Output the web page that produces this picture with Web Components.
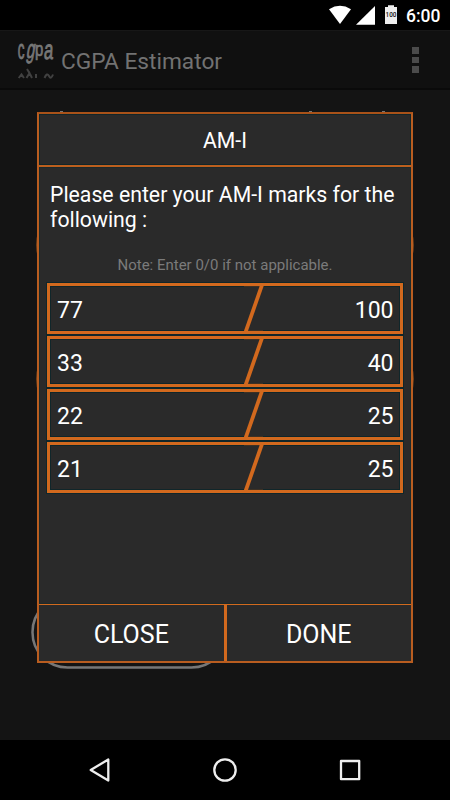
<!DOCTYPE html>
<html lang="en"><head><meta charset="utf-8"><title>CGPA Estimator</title>
<style>html,body{margin:0;background:#000}body{font-family:Roboto,"Noto Sans",sans-serif;color:#fff}</style></head>
<body><cgpa-screen></cgpa-screen>
<script>
const define=(name,html)=>customElements.define(name,class extends HTMLElement{
  constructor(){super();this.attachShadow({mode:'open'}).innerHTML=html;}
});
define('status-bar',`<style>:host{display:flex;height:30px;background:#000;align-items:center;justify-content:flex-end;padding-right:10px;box-sizing:border-box}
svg{display:block}span{font-size:17.5px;font-weight:500;line-height:32px;margin-left:8px;width:34px;white-space:nowrap;height:30px}</style>
<svg width="70" height="30" viewBox="328 0 70 30"><path d="M329 9.2Q340 2.5 351 9.2L340 24Z" fill="#fff"/><path d="M375 6V24.7H356Z" fill="#fff"/><path d="M388 5.3h6v1.8h3V24h-12V7.1h3Z" fill="#eee"/><text x="391" y="17.3" font-size="6.4" font-weight="500" text-anchor="middle" fill="#111">100</text></svg><span>6:00</span>`);
define('app-logo',`<style>:host{display:block;flex:none;width:36px;height:40px}svg{display:block;overflow:visible}text{font-family:"Liberation Sans",sans-serif;stroke:#777;stroke-width:.9}</style>
<svg width="36" height="40" viewBox="0 0 36 40">
<g fill="#777"><text transform="translate(-.3 18.5) scale(.5 1)" font-size="27">c</text><text transform="translate(7.8 18) skewX(-10) scale(.58 1)" font-size="26">g</text><text transform="translate(17 15.6) scale(.62 .82)" font-size="24">p</text><text transform="translate(25.4 19) skewX(-4) scale(.62 1)" font-size="27">a</text></g>
<g fill="none" stroke="#414141" stroke-width="2"><path d="M.7 38L3.500 34.500 6 38M8.500 38L11.500 33 14 38M9 29L12 34M18 34V38"/><path d="M26.500 38q2.500-6 4.500-2t4-1.500"/></g>
</svg>`);
define('app-bar',`<style>:host{display:flex;box-sizing:border-box;height:60px;background:#101010;border-top:1px solid #171717;border-bottom:2px solid #0a0a0a;align-items:center;padding:0 31.5px 0 18px}
h1{font-size:22.7px;line-height:28px;font-weight:400;margin:5px 0 0 7px;color:#727272;flex:1;white-space:nowrap}i{display:grid;gap:3.1px;margin-top:1px}b{width:6.3px;height:6.3px;background:#4b4b4b}</style>
<app-logo></app-logo><h1>CGPA Estimator</h1><i><b></b><b></b><b></b></i>`);
define('mark-row',`<style>:host{display:flex;box-sizing:border-box;height:51px;border:3px solid #d2691e;box-shadow:0 0 0 1px #10262a,inset 0 0 0 1px #10262a;align-items:stretch;justify-content:space-between;font-size:23px;line-height:49px;padding:0 6.5px 0 7px}
svg{flex:none;display:block;width:24px;height:45px}.a{width:184px}.b{flex:1;text-align:right}</style>
<div class="a"><slot name="score"></slot></div><svg viewBox="0 0 24 45"><path d="M3 0.500H20M4 44.500H22" stroke="#5d3920" stroke-width=".6"/><path d="M4.600 46L21 -1" stroke="#d2691e" stroke-width="3.800"/></svg><div class="b"><slot name="total"></slot></div>`);
define('dialog-button',`<style>:host{display:block;flex:1;text-align:center;font-size:25px;line-height:60px;height:55px}</style><slot></slot>`);
define('marks-dialog',`<style>:host{display:flex;flex-direction:column;box-sizing:border-box;width:376px;height:551px;background:#2a2a2a;border:2px solid #b95d20;border-top-color:#a95219}
header{height:51px;line-height:53px;border-bottom:2px solid #bd5f1e;text-align:center;font-size:21.2px;box-shadow:inset 0 0 0 1px #122629}
main{flex:1;padding:0 8px;box-shadow:inset 0 0 0 1px #1c2a2b}p{margin:15px 0 0 3px;font-size:21.25px;line-height:25px;white-space:nowrap}
small{display:block;text-align:center;color:#7b7b7b;font-size:15px;line-height:20px;margin:23px 0 8px}
section{display:grid;gap:2px}footer{display:flex;height:56px;border-top:1.5px solid #d2691e}hr{width:3px;margin:0;border:0;background:#d2691e}</style>
<header><slot name="title"></slot></header><main><p><slot name="prompt"></slot></p><small><slot name="note"></slot></small><section><slot></slot></section></main>
<footer><dialog-button>CLOSE</dialog-button><hr><dialog-button>DONE</dialog-button></footer>`);
define('under-layer',`<style>:host{display:block}svg{display:block}</style><svg width="450" height="650" viewBox="0 90 450 650"><g fill="none" stroke="#704019" stroke-width="2"><rect x="37" y="208" width="376" height="74" rx="37"/><rect x="37" y="342" width="376" height="74" rx="37"/></g><rect x="32.5" y="597" width="194" height="70.5" rx="35" fill="none" stroke="#777" stroke-width="2.5"/><path d="M60 111.5h3M309 111.5h3M382 111.5h3" stroke="#777"/></svg>`);
define('nav-bar',`<style>:host{display:flex;height:60px;background:#000;justify-content:space-around;padding:0 37.5px;align-items:center}svg{width:28px;height:28px;fill:none;stroke:#eee;stroke-width:2.3;stroke-linejoin:round}</style>
<svg viewBox="0 0 28 28"><path d="M4.7 14L22.300 3.500v21Z"/></svg><svg viewBox="0 0 28 28"><circle cx="14" cy="14" r="10.7"/></svg><svg viewBox="0 0 28 28"><rect x="5" y="5" width="18.2" height="18.2"/></svg>`);
define('cgpa-screen',`<style>:host{display:flex;flex-direction:column;position:relative;width:450px;height:800px;overflow:hidden;background:#141414}under-layer{flex:1}
marks-dialog{position:absolute;left:37px;top:112px}</style>
<status-bar></status-bar><app-bar></app-bar><under-layer></under-layer><nav-bar></nav-bar>
<marks-dialog><span slot="title">AM-I</span><span slot="prompt">Please enter your AM-I marks for the<br>following :</span><span slot="note">Note: Enter 0/0 if not applicable.</span>
${[[77,100],[33,40],[22,25],[21,25]].map(([a,b])=>`<mark-row><span slot="score">${a}</span><span slot="total">${b}</span></mark-row>`).join('')}</marks-dialog>`);
</script></body></html>
